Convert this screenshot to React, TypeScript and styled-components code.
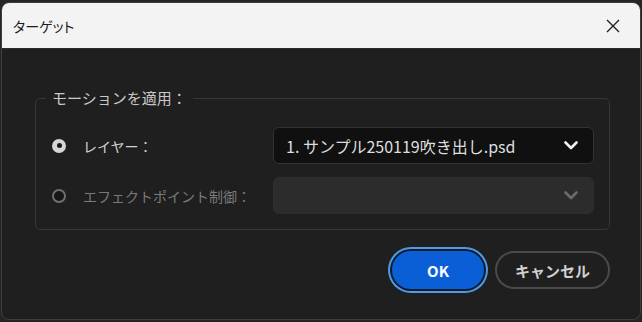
import React, { useState } from "react";
import styled, { createGlobalStyle } from "styled-components";

const GlobalStyle = createGlobalStyle`
  html, body {
    margin: 0;
    padding: 0;
    background: #252525;
    font-family: "Noto Sans CJK JP", "Noto Sans", sans-serif;
  }
`;

const Window = styled.div`
  box-sizing: border-box;
  width: 640px;
  height: 318px;
  margin: 2px 1px;
  border: 1px solid #3d3d3d;
  border-radius: 8px;
  overflow: hidden;
  background: #1f1f1f;
  display: flex;
  flex-direction: column;
`;

const TitleBar = styled.div`
  height: 45px;
  flex-shrink: 0;
  background: #f3f3f3;
  display: flex;
  align-items: center;
  justify-content: space-between;
  padding: 0 19px 0 11px;
  border-bottom: 1px solid #2a2a2a;
`;

const Title = styled.span`
  font-size: 14px;
  color: #1b1b1b;
  padding-top: 1px;
  font-feature-settings: "palt";
`;

const CloseButton = styled.button`
  width: 16px;
  height: 16px;
  padding: 0;
  border: none;
  background: transparent;
  display: flex;
  align-items: center;
  justify-content: center;
`;

const Body = styled.div`
  flex: 1;
  display: flex;
  flex-direction: column;
  padding: 39px 30px 0 33px;
`;

const Group = styled.fieldset`
  margin: 0;
  padding: 19px 15px 15px 16px;
  border: 1px solid #373737;
  border-radius: 5px;
`;

const Legend = styled.legend`
  margin-left: -6px;
  padding: 0 6px;
  font-size: 15px;
  line-height: 20px;
  color: #c9c9c9;
`;

const Rows = styled.div`
  display: grid;
  grid-template-columns: 14px 1fr 321px;
  column-gap: 17px;
  row-gap: 13px;
  align-items: center;
`;

const Radio = styled.span<{ $checked: boolean }>`
  box-sizing: border-box;
  width: 14px;
  height: 14px;
  border-radius: 50%;
  display: flex;
  align-items: center;
  justify-content: center;
  background: ${(p) => (p.$checked ? "#d6d6d6" : "#161616")};
  border: ${(p) => (p.$checked ? "none" : "2px solid #6f6f6f")};

  &::after {
    content: "";
    width: 5px;
    height: 5px;
    border-radius: 50%;
    background: #1a1a1a;
    display: ${(p) => (p.$checked ? "block" : "none")};
  }
`;

const Label = styled.span<{ $disabled?: boolean }>`
  font-size: 14px;
  color: ${(p) => (p.$disabled ? "#7a7a7a" : "#d2d2d2")};
`;

const Select = styled.div<{ $disabled?: boolean }>`
  box-sizing: border-box;
  height: 37px;
  border-radius: 6px;
  border: 1px solid ${(p) => (p.$disabled ? "#2e2e2e" : "#333333")};
  background: ${(p) => (p.$disabled ? "#2c2c2c" : "#101010")};
  display: flex;
  align-items: center;
  justify-content: space-between;
  padding: 0 15px 0 12px;
`;

const SelectText = styled.span`
  font-size: 16px;
  color: #dedede;
  white-space: nowrap;
`;

const Footer = styled.div`
  display: flex;
  justify-content: flex-end;
  gap: 11px;
  margin-top: 21px;
`;

const Button = styled.button<{ $primary?: boolean }>`
  box-sizing: border-box;
  height: 38px;
  width: ${(p) => (p.$primary ? "92px" : "115px")};
  border-radius: 19px;
  font-family: "Noto Sans CJK JP", "Noto Sans", sans-serif;
  font-size: 15px;
  font-weight: 700;
  color: ${(p) => (p.$primary ? "#ffffff" : "#d0d0d0")};
  background: ${(p) => (p.$primary ? "#0b5fd6" : "transparent")};
  border: 2px solid ${(p) => (p.$primary ? "#0b5fd6" : "#4a4a4a")};
  box-shadow: ${(p) =>
    p.$primary ? "0 0 0 2px #111a26, 0 0 0 4px #4c9be6" : "none"};
  padding: 0;
`;

const Chevron = ({ color }: { color: string }) => (
  <svg width="14" height="9" viewBox="0 0 14 9">
    <polyline
      points="1.5,1.5 7,7 12.5,1.5"
      fill="none"
      stroke={color}
      strokeWidth="2.6"
      strokeLinecap="round"
      strokeLinejoin="round"
    />
  </svg>
);

export default function App() {
  const [target, setTarget] = useState<"layer" | "effect">("layer");

  return (
    <>
      <GlobalStyle />
      <Window>
        <TitleBar>
          <Title>ターゲット</Title>
          <CloseButton aria-label="閉じる">
            <svg width="14" height="14" viewBox="0 0 14 14">
              <path
                d="M1 1 L13 13 M13 1 L1 13"
                stroke="#1b1b1b"
                strokeWidth="1.3"
                fill="none"
              />
            </svg>
          </CloseButton>
        </TitleBar>
        <Body>
          <Group>
            <Legend>モーションを適用：</Legend>
            <Rows>
              <Radio
                $checked={target === "layer"}
                onClick={() => setTarget("layer")}
              />
              <Label>レイヤー：</Label>
              <Select>
                <SelectText>1. サンプル250119吹き出し.psd</SelectText>
                <Chevron color="#f0f0f0" />
              </Select>
              <Radio $checked={target === "effect"} />
              <Label $disabled>エフェクトポイント制御：</Label>
              <Select $disabled>
                <span />
                <Chevron color="#6a6a6a" />
              </Select>
            </Rows>
          </Group>
          <Footer>
            <Button $primary>OK</Button>
            <Button>キャンセル</Button>
          </Footer>
        </Body>
      </Window>
    </>
  );
}
